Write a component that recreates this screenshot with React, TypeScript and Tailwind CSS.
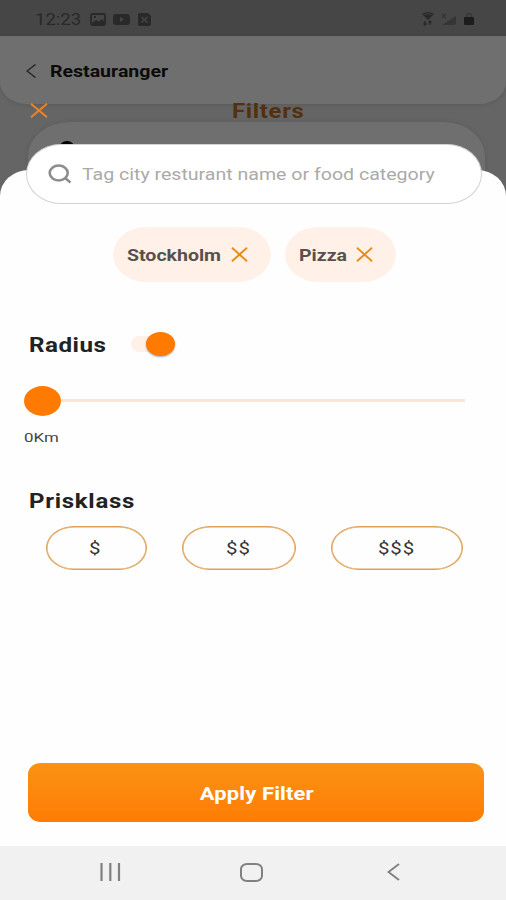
import { useState } from 'react';
import type { ReactNode } from 'react';

type CrossProps = {
  className?: string;
};

const PRICES = [
  { label: '$', box: 'w-[101px] pr-[2px]' },
  { label: '$$', box: 'w-[114px] pr-[2px]' },
  { label: '$$$', box: 'w-[132px]' },
];

function Cross({ className }: CrossProps) {
  return (
    <svg
      viewBox="0 0 18 15"
      preserveAspectRatio="none"
      className={className}
      fill="none"
      stroke="currentColor"
      strokeWidth="2"
    >
      <path d="M1 .8 17 14.2M17 .8 1 14.2" />
    </svg>
  );
}

function Tag({ className, onRemove, children }: { className: string; onRemove: () => void; children: ReactNode }) {
  return (
    <div className={`flex h-[55px] items-center justify-between rounded-[34px/28px] bg-[#fff1e7] pr-[23px] pl-3.5 ${className}`}>
      <span className="w-0 pt-[3px] text-base font-bold text-[#57504c]">{children}</span>
      <button type="button" onClick={onRemove} aria-label="Remove">
        <Cross className="h-[15px] w-[17px] text-[#e88a1c]" />
      </button>
    </div>
  );
}

function StatusBar() {
  return (
    <div className="flex h-9 items-center bg-[#464646] pt-0.5 pr-[32px] pl-[35px] text-[#292929]">
      <span className="w-[55px] pt-px text-base">
        <span className="inline-block origin-left scale-x-[1.16]">12:23</span>
      </span>
      <svg viewBox="0 0 16 13" className="h-[13px] w-4" fill="none" stroke="currentColor" strokeWidth="1.8">
        <rect x="1" y="1" width="14" height="11" rx="1.5" />
        <path d="m2 10 4-3 3 1.5L12 6l2 2v3H2z" fill="currentColor" stroke="none" />
        <path d="M4 4h2" />
      </svg>
      <svg viewBox="0 0 17 11" className="ml-[7px] h-[11px] w-[17px]">
        <rect width="17" height="11" rx="3" fill="currentColor" />
        <path d="m7 3 4 2.5L7 8z" fill="#464646" />
      </svg>
      <svg viewBox="0 0 13 13" className="ml-2 h-[13px] w-[13px]">
        <path d="M2 0h8l3 3v8a2 2 0 0 1-2 2H2a2 2 0 0 1-2-2V2a2 2 0 0 1 2-2z" fill="currentColor" />
        <path d="m3.500 4 6 5.500M9.500 4l-6 5.500" stroke="#464646" strokeWidth="1.4" />
      </svg>
      <svg viewBox="0 0 12 14" className="ml-auto h-3.5 w-3">
        <path d="M0 2q6-4 12 0L6 8z" fill="currentColor" />
        <path d="M2.500 2.500q3.500-2 7 0" stroke="#464646" strokeWidth=".8" fill="none" />
        <path d="M3 9v4M1.500 11.500 3 13l1.500-1.500M8 13V9M6.500 10.500 8 9l1.500 1.500" stroke="currentColor" strokeWidth="1.300" fill="none" />
      </svg>
      <svg viewBox="0 0 15 12" className="ml-[7px] h-3 w-[15px] text-[#353535]">
        <path d="M15 3v7a2 2 0 0 1-2 2H1z" fill="currentColor" />
        <path d="m1 1 4 4M5 1 1 5" stroke="currentColor" strokeWidth="1.300" />
      </svg>
      <svg viewBox="0 0 10 12" className="ml-2 h-3 w-2.5 text-[#1c1c1c]">
        <path d="M2.500 5V3a2.500 2.500 0 0 1 5 0v2" stroke="#353535" strokeWidth="1.300" fill="none" />
        <rect y="4" width="10" height="8" rx="1" fill="currentColor" />
      </svg>
    </div>
  );
}

// Dimmed screen that stays visible behind the sheet
function Backdrop() {
  return (
    <div className="absolute inset-x-0 top-0 h-[230px] overflow-hidden bg-[#656565]">
      <StatusBar />
      <div className="flex h-[68px] items-center bg-[#6f6f6f] pl-[26px] shadow-[0_1px_4px_rgba(0,0,0,0.12)] [border-bottom-left-radius:26px_22px] [border-bottom-right-radius:26px_22px]">
        <svg viewBox="0 0 10 14" className="mt-px h-3.5 w-2.5" fill="none" stroke="#222" strokeWidth="1.4">
          <path d="M9.500.5 1 7l8.500 6.500" />
        </svg>
        <span className="ml-3.5 inline-block origin-left scale-x-[1.22] pt-[3px] text-base font-bold text-[#0b0b0b]">
          Restauranger
        </span>
      </div>
      <div className="mt-[18px] ml-[28px] h-20 w-[457px] rounded-[42px/34px] bg-[#6f6f6f] pt-[19px] pl-[31px] shadow-[0_0_5px_rgba(0,0,0,0.1)]">
        <div className="h-4 w-4 rounded-full border-[3px] border-black" />
      </div>
    </div>
  );
}

function NavBar() {
  return (
    <div className="flex h-[54px] items-center bg-[#f1f1f1] pb-[2px] pl-[100px] text-[#808080]">
      <svg viewBox="0 0 21 18" className="h-[18px] w-[21px]" stroke="currentColor" strokeWidth="2.200">
        <path d="M1.500 0v18M10.300 0v18M19 0v18" />
      </svg>
      <div className="ml-[119px] h-[19px] w-[23px] rounded-[7px/6px] border-2 border-current" />
      <svg viewBox="0 0 13 18" className="ml-[124px] h-[18px] w-[13px]" fill="none" stroke="currentColor" strokeWidth="2">
        <path d="M12 1 1.500 9 12 17" />
      </svg>
    </div>
  );
}

export default function App() {
  const [tags, setTags] = useState(['Stockholm', 'Pizza']);
  const [price, setPrice] = useState('');

  const removeTag = (tag: string) => setTags(tags.filter((t) => t !== tag));

  return (
    <div className="relative h-[900px] w-[506px] overflow-hidden bg-white font-['Roboto',sans-serif]">
      <Backdrop />

      <div className="relative flex h-full flex-col pt-[99px]">
        {/* Title */}
        <div className="flex h-[23px] items-center pl-[30px]">
          <button type="button" aria-label="Close">
            <Cross className="h-[15px] w-[18px] text-[#f08223]" />
          </button>
          <h1 className="ml-[184px] origin-left scale-x-[1.19] pt-px text-xl font-bold tracking-[0.03em] text-[#53300f]">
            Filters
          </h1>
        </div>

        {/* Sheet */}
        <div className="mt-12 flex flex-1 flex-col bg-[#fefefe] [border-top-left-radius:29px_26px] [border-top-right-radius:29px_26px]">
          <div className="-mt-[26px] ml-[26px] flex h-[60px] w-[456px] items-center rounded-[35px/30px] border border-[#d2d2d2] bg-white pl-[21px]">
            <svg viewBox="0 0 24 20" className="h-5 w-6" fill="none" stroke="#8d8d8d" strokeWidth="2.600">
              <ellipse cx="10.700" cy="9" rx="9" ry="7.500" />
              <path d="m17 14 5.500 4.500" />
            </svg>
            <span className="ml-2.5 inline-block origin-left scale-x-[1.222] pt-0.5 text-base whitespace-nowrap text-[#aaa]">
              Tag city resturant name or food category
            </span>
          </div>

          <div className="mt-[23px] flex h-[55px] gap-3.5 pl-[113px]">
            {tags.map((tag) => (
              <Tag
                key={tag}
                className={tag === 'Stockholm' ? 'w-[158px]' : 'w-[111px]'}
                onRemove={() => removeTag(tag)}
              >
                <span className="inline-block origin-left scale-x-[1.22]">{tag}</span>
              </Tag>
            ))}
          </div>

          {/* Radius */}
          <div className="mt-[48px] flex h-[28px] items-center pl-[29px]">
            <h2 className="w-[102px] pt-px text-xl font-bold tracking-[0.02em] text-[#222]">
              <span className="inline-block origin-left scale-x-[1.21]">Radius</span>
            </h2>
            <div className="flex h-4 w-11 items-center justify-end rounded-full bg-[#fff1e7]">
              <div className="h-6 w-[29px] shrink-0 rounded-[50%] bg-[#ff7a00] shadow-[0_1px_2px_rgba(0,0,0,0.35)]" />
            </div>
          </div>
          <div className="mt-[28px] flex h-[30px] items-center pl-6">
            <div className="h-[30px] w-[37px] rounded-[50%] bg-[#ff7a00]" />
            <div className="-mt-0.5 h-[3px] w-[404px] bg-[#ffe4d3]" />
          </div>
          <span className="mt-[11px] ml-6 inline-block w-fit origin-left scale-x-[1.25] text-[13.5px] leading-5 text-[#444]">
            0Km
          </span>

          {/* Prisklass */}
          <h2 className="mt-10 ml-[29px] w-fit origin-left scale-x-[1.2] text-xl leading-7 font-bold tracking-[0.03em] text-[#222]">
            Prisklass
          </h2>
          <div className="mt-[11px] flex h-11 gap-[35px] pl-[46px]">
            {PRICES.map(({ label, box }) => (
              <button
                key={label}
                type="button"
                onClick={() => setPrice(label)}
                aria-pressed={price === label}
                className={`flex h-full items-center justify-center rounded-[28px/22px] border-[1.5px] border-[#dda055] pt-px text-[17px] text-[#333] shadow-[inset_0_0_0_0.5px_#dda055] ${box}`}
              >
                <span className="inline-block scale-x-[1.2] tracking-[0.05em]">{label}</span>
              </button>
            ))}
          </div>

          <button
            type="button"
            className="mt-auto mb-6 ml-[28px] h-[59px] w-[456px] rounded-[13px/11px] bg-linear-to-b from-[#fa9212] to-[#ff7c05] pt-0.5 pl-0.5 text-lg font-bold text-white"
          >
            <span className="inline-block scale-x-[1.22] tracking-[0.006em]">Apply Filter</span>
          </button>
        </div>

        <NavBar />
      </div>
    </div>
  );
}
